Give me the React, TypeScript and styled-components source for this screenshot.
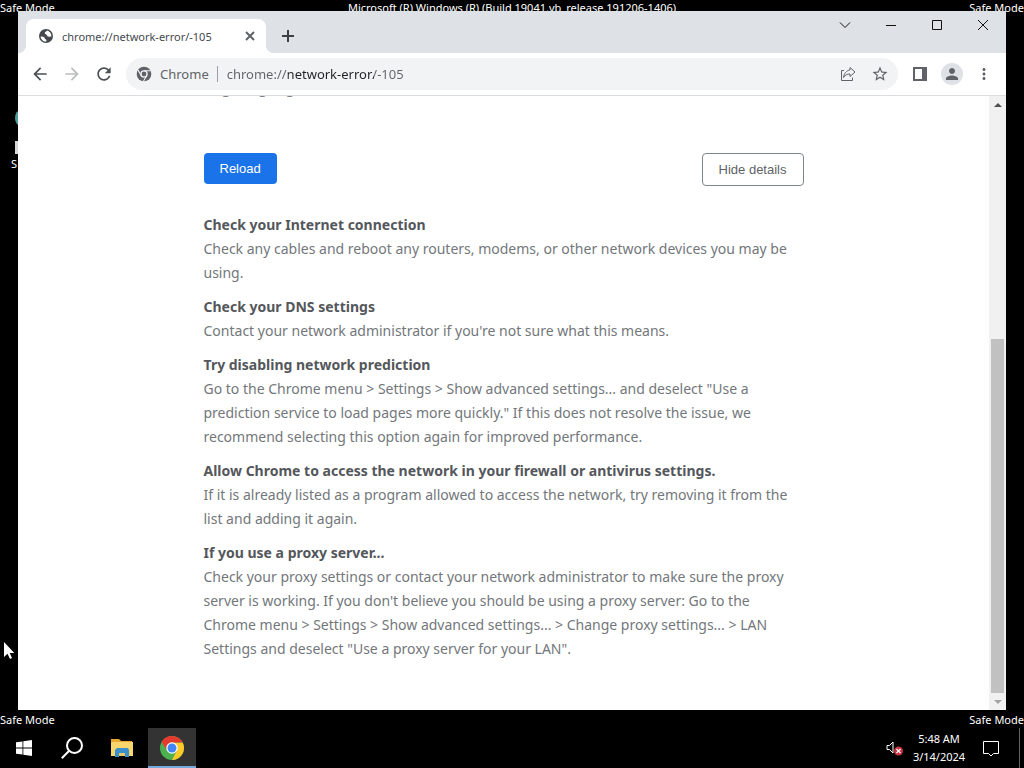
import React from "react";
import styled, { createGlobalStyle, css } from "styled-components";

const GlobalStyle = createGlobalStyle`
  *, *::before, *::after { box-sizing: border-box; }
  body { margin: 0; background: #000; font-family: "Noto Sans", "Open Sans", sans-serif; }
  button, input { font: inherit; }
  button { border: 0; padding: 0; background: none; color: inherit; }
  svg { display: block; flex: none; }
`;

const Desktop = styled.div`
  position: relative;
  display: flex;
  flex-direction: column;
  min-height: 100vh;
  background: #000;
  color: #fff;
  overflow: hidden;
`;

const Banner = styled.div<{ $height: number; $top?: number }>`
  display: flex;
  justify-content: space-between;
  align-items: flex-start;
  height: ${(p) => p.$height}px;
  padding-top: ${(p) => p.$top ?? 0}px;
  font-size: 11px;
  line-height: 16px;
  white-space: nowrap;
`;

const Shortcut = styled.div`
  position: absolute;
  left: 11px;
  top: 110px;
  display: flex;
  flex-direction: column;
  font-size: 11px;
  line-height: 16px;
`;

const Pointer = styled.svg`
  position: absolute;
  left: 3px;
  top: 641px;
`;

const Window = styled.section`
  position: relative;
  z-index: 1;
  display: flex;
  flex-direction: column;
  flex: 1;
  margin: 0 18px;
  background: #fff;
  color: #5f6368;
`;

const TabStrip = styled.header`
  display: flex;
  align-items: flex-end;
  height: 42px;
  padding-left: 8px;
  background: #dee1e6;
`;

const Tab = styled.div`
  position: relative;
  display: flex;
  align-items: center;
  gap: 8px;
  width: 240px;
  height: 34px;
  padding: 0 10px 0 12px;
  border-radius: 8px 8px 0 0;
  background: #fff;
  color: #45494d;
  font-size: 11px;

  &::before, &::after {
    content: "";
    position: absolute;
    bottom: 0;
    width: 8px;
    height: 8px;
  }
  &::before {
    right: 100%;
    background: radial-gradient(circle at 0 0, transparent 8px, #fff 8px);
  }
  &::after {
    left: 100%;
    background: radial-gradient(circle at 100% 0, transparent 8px, #fff 8px);
  }
`;

const TabTitle = styled.span`
  flex: 1;
  white-space: nowrap;
`;

const IconButton = styled.button<{ $w: number; $h?: number; $color?: string }>`
  display: flex;
  align-items: center;
  justify-content: center;
  flex: none;
  width: ${(p) => p.$w}px;
  height: ${(p) => p.$h ?? 32}px;
  color: ${(p) => p.$color ?? "#5f6368"};
`;

const Caption = styled.div`
  display: flex;
  align-self: flex-start;
  margin-left: auto;
`;

const Toolbar = styled.nav`
  display: flex;
  align-items: center;
  height: 43px;
  padding: 0 8px 0 6px;
  border-bottom: 1px solid #dadce0;
`;

const AddressBar = styled.div`
  display: flex;
  align-items: center;
  flex: 1;
  height: 32px;
  margin: 0 8px 0 6px;
  padding: 0 2px 0 10px;
  border-radius: 16px;
  background: #f1f3f4;
  font-size: 13px;
`;

const SiteName = styled.label`
  margin-left: 8px;
  padding-right: 8px;
  border-right: 1px solid #9aa0a6;
  line-height: 16px;
`;

const Address = styled.input`
  flex: 1;
  min-width: 0;
  height: 24px;
  margin-left: 9px;
  padding: 0;
  border: 0;
  outline: 0;
  color: transparent;
  background: linear-gradient(to right, #5f6368 61px, #202124 61px, #202124 147px, #5f6368 147px);
  background-clip: text;
  -webkit-background-clip: text;
`;

const Avatar = styled.span`
  display: flex;
  align-items: center;
  justify-content: center;
  width: 22px;
  height: 22px;
  border-radius: 50%;
  background: #dee1e6;
`;

const Viewport = styled.div`
  display: flex;
  flex: 1;
`;

const Page = styled.main`
  flex: 1;
  min-width: 0;
  padding: 0 24px 39px;
  overflow: hidden;
`;

const Article = styled.article`
  max-width: 600px;
  margin: 0 auto;
`;

const ErrorCode = styled.div`
  height: 2px;
  display: flex;
  align-items: flex-end;
  overflow: hidden;
  color: #5f6368;
  font-size: 11px;
  line-height: 14px;
`;

const Actions = styled.div`
  display: flex;
  justify-content: space-between;
  align-items: flex-start;
  height: 60px;
  margin-top: 55px;
`;

const ActionButton = styled.button<{ $primary?: boolean }>`
  padding: 8px 16px;
  border-radius: 4px;
  font-family: "Liberation Sans", Arial, sans-serif;
  font-size: 13px;
  line-height: 15px;
  ${(p) =>
    p.$primary
      ? css`
          background: #1a73e8;
          color: #fff;
        `
      : css`
          border: 1px solid #80868b;
          background: #fff;
          color: #5f6368;
        `}
`;

const Suggestion = styled.section`
  margin-bottom: 10px;
  font-size: 14px;
  line-height: 24px;
`;

const SuggestionTitle = styled.h2`
  margin: 0;
  color: #54575b;
  font-size: inherit;
  font-weight: 700;
`;

const SuggestionText = styled.p`
  margin: 0;
  color: #73777b;
  white-space: pre-line;
`;

const Scrollbar = styled.div`
  display: flex;
  flex-direction: column;
  width: 17px;
  background: #f1f1f1;
`;

const ScrollSpace = styled.div`
  flex: 226;
`;

const ScrollThumb = styled.div`
  flex: 354;
  margin: 0 2px;
  background: #c1c1c1;
`;

const Taskbar = styled.footer`
  display: flex;
  height: 40px;
  background: #000;
`;

const TaskButton = styled(IconButton)<{ $active?: boolean }>`
  border-bottom: 2px solid ${(p) => (p.$active ? "#76a9dc" : "transparent")};
  padding-top: 2px;
  background: ${(p) => (p.$active ? "#333" : "none")};
`;

const Tray = styled.div`
  display: flex;
  align-items: center;
  margin-left: auto;
`;

const Clock = styled.time`
  width: 62px;
  margin-right: 5px;
  font-size: 11px;
  line-height: 18px;
  text-align: center;
  white-space: nowrap;
`;

const ShowDesktop = styled.button`
  align-self: stretch;
  width: 5px;
  margin-left: 12px;
  border-left: 1px solid #666;
`;

const suggestions = [
  {
    title: "Check your Internet connection",
    text: "Check any cables and reboot any routers, modems, or other network devices you may be\nusing.",
  },
  {
    title: "Check your DNS settings",
    text: "Contact your network administrator if you're not sure what this means.",
  },
  {
    title: "Try disabling network prediction",
    text: 'Go to the Chrome menu > Settings > Show advanced settings... and deselect "Use a\nprediction service to load pages more quickly." If this does not resolve the issue, we\nrecommend selecting this option again for improved performance.',
  },
  {
    title: "Allow Chrome to access the network in your firewall or antivirus settings.",
    text: "If it is already listed as a program allowed to access the network, try removing it from the\nlist and adding it again.",
  },
  {
    title: "If you use a proxy server...",
    text: 'Check your proxy settings or contact your network administrator to make sure the proxy\nserver is working. If you don\'t believe you should be using a proxy server: Go to the\nChrome menu > Settings > Show advanced settings... > Change proxy settings... > LAN\nSettings and deselect "Use a proxy server for your LAN".',
  },
];

const Material = ({ d, size = 20 }: { d: string; size?: number }) => (
  <svg width={size} height={size} viewBox="0 0 24 24" fill="currentColor" aria-hidden="true">
    <path d={d} />
  </svg>
);

const icons = {
  globe:
    "M12 2C6.48 2 2 6.48 2 12s4.48 10 10 10 10-4.48 10-10S17.52 2 12 2zM4 12c0-.61.08-1.21.21-1.78L8.99 15v1c0 1.1.9 2 2 2v1.93C7.06 19.43 4 16.07 4 12zm13.89 5.4c-.26-.81-1-1.4-1.9-1.4h-1v-3c0-.55-.45-1-1-1h-6v-2h2c.55 0 1-.45 1-1V7h2c1.1 0 2-.9 2-2v-.41C17.92 5.77 20 8.65 20 12c0 2.08-.81 3.98-2.11 5.4z",
  back: "M20 11H7.83l5.59-5.59L12 4l-8 8 8 8 1.41-1.41L7.83 13H20v-2z",
  forward: "M12 4l-1.41 1.41L16.17 11H4v2h12.17l-5.58 5.59L12 20l8-8z",
  reload:
    "M17.65 6.35C16.2 4.9 14.21 4 12 4c-4.42 0-7.99 3.58-7.99 8s3.57 8 7.99 8c3.73 0 6.84-2.55 7.73-6h-2.08c-.82 2.33-3.04 4-5.65 4-3.31 0-6-2.69-6-6s2.69-6 6-6c1.66 0 3.14.69 4.22 1.78L13 11h7V4l-2.35 2.35z",
  star: "M22 9.24l-7.19-.62L12 2 9.19 8.63 2 9.24l5.46 4.73L5.82 21 12 17.27 18.18 21l-1.63-7.03L22 9.24zM12 15.4l-3.76 2.27 1-4.28-3.32-2.88 4.38-.38L12 6.1l1.71 4.04 4.38.38-3.32 2.88 1 4.28L12 15.4z",
  person:
    "M12 12c2.21 0 4-1.79 4-4s-1.79-4-4-4-4 1.79-4 4 1.79 4 4 4zm0 2c-2.67 0-8 1.34-8 4v2h16v-2c0-2.66-5.33-4-8-4z",
  more: "M12 8c1.1 0 2-.9 2-2s-.9-2-2-2-2 .9-2 2 .9 2 2 2zm0 2c-1.1 0-2 .9-2 2s.9 2 2 2 2-.9 2-2-.9-2-2-2zm0 6c-1.1 0-2 .9-2 2s.9 2 2 2 2-.9 2-2-.9-2-2-2z",
};

const Stroke = ({ d, size, width = 1 }: { d: string; size: number; width?: number }) => (
  <svg width={size} height={size} viewBox={`0 0 ${size} ${size}`} fill="none" stroke="currentColor" strokeWidth={width} aria-hidden="true">
    <path d={d} />
  </svg>
);

const Globe = () => (
  <svg width="16" height="16" viewBox="0 0 16 16" aria-hidden="true">
    <circle cx="8" cy="8" r="7" fill="currentColor" />
    <path
      d="M2.6 8.6C4.6 8.2 6.6 9 6.8 10.4C7 11.4 8.4 11 8.4 12.2V13.6C5.2 13.8 2.8 11.6 2.6 8.6ZM9 2.6C8.4 3.8 6.8 3.8 6.8 5.2C7.2 6.6 8.6 6 9 7.4C9.6 8.8 11.6 8.8 13.4 8.6C13.6 5.4 11.6 3.2 9 2.6Z"
      fill="#fff"
    />
  </svg>
);

const ChromeMono = () => (
  <svg width="16" height="16" viewBox="0 0 24 24" aria-hidden="true">
    <circle cx="12" cy="12" r="11" fill="#5f6368" />
    <circle cx="12" cy="12" r="5.6" fill="#f1f3f4" />
    <circle cx="12" cy="12" r="3.6" fill="#5f6368" />
    <path d="M12 7.2H22M7.8 14.4L2.8 5.8M16.2 14.4L11.2 23" stroke="#f1f3f4" strokeWidth="1.6" />
  </svg>
);

const ChromeLogo = () => (
  <svg width="24" height="24" viewBox="0 0 48 48" aria-hidden="true">
    <circle cx="24" cy="24" r="24" fill="#4caf50" />
    <path d="M24 13H45.3A24 24 0 0 1 24 48L33.5 29.5Z" fill="#ffc928" />
    <path d="M3.2 12A24 24 0 0 1 45.3 13H24L14.5 29.5Z" fill="#e33b2e" />
    <circle cx="24" cy="24" r="11.5" fill="#fff" />
    <circle cx="24" cy="24" r="9" fill="#4285f4" />
  </svg>
);

export default function App() {
  return (
    <>
      <GlobalStyle />
      <Desktop>
        <Banner $height={11}>
          <span>Safe Mode</span>
          <span>Microsoft (R) Windows (R) (Build 19041.vb_release.191206-1406)</span>
          <span>Safe Mode</span>
        </Banner>

        <Shortcut>
          <svg width="16" height="46" viewBox="0 0 16 46" aria-hidden="true">
            <ellipse cx="10" cy="8" rx="6" ry="8" fill="#4f9ca3" />
            <path d="M4 31h12v13H4z" fill="#d8d8d8" />
          </svg>
          <span>S</span>
        </Shortcut>

        <Window>
          <TabStrip>
            <Tab>
              <Globe />
              <TabTitle>chrome://network-error/-105</TabTitle>
              <IconButton $w={12} $h={16} aria-label="Close tab">
                <Stroke size={10} width={2} d="M1 1L9 9M9 1L1 9" />
              </IconButton>
            </Tab>
            <IconButton $w={44} $h={34} $color="#3c4043" aria-label="New tab">
              <Stroke size={12} width={2} d="M6 0V12M0 6H12" />
            </IconButton>
            <Caption>
              <IconButton $w={46} $h={28} $color="#111" aria-label="Search tabs">
                <Stroke size={12} d="M1 3.5L6 8.5L11 3.5" />
              </IconButton>
              <IconButton $w={46} $h={28} $color="#111" aria-label="Minimize">
                <Stroke size={10} d="M0 5.5H10" />
              </IconButton>
              <IconButton $w={46} $h={28} $color="#111" aria-label="Maximize">
                <Stroke size={10} d="M.5 .5H9.5V9.5H.5Z" />
              </IconButton>
              <IconButton $w={46} $h={28} $color="#111" aria-label="Close">
                <Stroke size={10} d="M0 0L10 10M10 0L0 10" />
              </IconButton>
            </Caption>
          </TabStrip>

          <Toolbar>
            <IconButton $w={32} aria-label="Back" $color="#4c5054"><Material d={icons.back} /></IconButton>
            <IconButton $w={32} $color="#babcbe" aria-label="Forward"><Material d={icons.forward} /></IconButton>
            <IconButton $w={32} aria-label="Reload" $color="#4c5054"><Material d={icons.reload} /></IconButton>
            <AddressBar>
              <ChromeMono />
              <SiteName htmlFor="address">Chrome</SiteName>
              <Address id="address" defaultValue="chrome://network-error/-105" />
              <IconButton $w={32} aria-label="Share">
                <Stroke
                  size={16}
                  d="M4 4.5H1.5V14.5H12.5V11.5M10 1.5L15 6L10 10.5V8C7 8 5 9 3.5 11.5C4 7.5 6.5 4.5 10 4Z"
                />
              </IconButton>
              <IconButton $w={32} aria-label="Bookmark"><Material d={icons.star} size={18} /></IconButton>
            </AddressBar>
            <IconButton $w={28} aria-label="Side panel">
              <svg width="14" height="14" viewBox="0 0 14 14" aria-hidden="true">
                <path fill="currentColor" fillRule="evenodd" d="M0 0H14V14H0ZM2 2V12H9V2Z" />
              </svg>
            </IconButton>
            <IconButton $w={36} aria-label="Profile">
              <Avatar><Material d={icons.person} size={18} /></Avatar>
            </IconButton>
            <IconButton $w={28} aria-label="Menu"><Material d={icons.more} size={18} /></IconButton>
          </Toolbar>

          <Viewport>
            <Page>
              <Article>
                <ErrorCode>ERR_NAME_NOT_RESOLVED</ErrorCode>
                <Actions>
                  <ActionButton $primary>Reload</ActionButton>
                  <ActionButton>Hide details</ActionButton>
                </Actions>
                {suggestions.map((s) => (
                  <Suggestion key={s.title}>
                    <SuggestionTitle>{s.title}</SuggestionTitle>
                    <SuggestionText>{s.text}</SuggestionText>
                  </Suggestion>
                ))}
              </Article>
            </Page>
            <Scrollbar>
              <IconButton $w={17} $h={17} $color="#505050" aria-label="Scroll up">
                <svg width="8" height="4" viewBox="0 0 8 4"><path d="M0 4L4 0L8 4Z" fill="currentColor" /></svg>
              </IconButton>
              <ScrollSpace />
              <ScrollThumb />
              <IconButton $w={17} $h={17} $color="#a3a3a3" aria-label="Scroll down">
                <svg width="8" height="4" viewBox="0 0 8 4"><path d="M0 0L4 4L8 0Z" fill="currentColor" /></svg>
              </IconButton>
            </Scrollbar>
          </Viewport>
        </Window>

        <Banner $height={18} $top={2}>
          <span>Safe Mode</span>
          <span>Safe Mode</span>
        </Banner>

        <Taskbar>
          <TaskButton $w={48} $h={40} $color="#fff" aria-label="Start">
            <svg width="16" height="16" viewBox="0 0 16 16" fill="currentColor" aria-hidden="true">
              <path d="M0 2.3L6.5 1.4V7.6H0ZM7.3 1.3L16 0V7.6H7.3ZM0 8.4H6.5V14.6L0 13.7ZM7.3 8.4H16V16L7.3 14.7Z" />
            </svg>
          </TaskButton>
          <TaskButton $w={48} $h={40} $color="#fff" aria-label="Search">
            <svg width="22" height="22" viewBox="0 0 22 22" fill="none" stroke="currentColor" strokeWidth="2" aria-hidden="true">
              <circle cx="13.5" cy="8.5" r="7.5" />
              <path d="M8.2 13.8L.8 21.2" />
            </svg>
          </TaskButton>
          <TaskButton $w={52} $h={40} aria-label="File Explorer">
            <svg width="22" height="18" viewBox="0 0 22 18" aria-hidden="true">
              <path d="M0 0H8L10 2H21V6H0Z" fill="#e8a92e" />
              <path d="M1 3H22V17H0V4Z" fill="#f9d56e" />
              <path d="M4 18V11L6 9H17L18 11V18H14V14H8V18Z" fill="#3c8fcd" />
              <path d="M8 14H14V17H8Z" fill="#e8c766" />
            </svg>
          </TaskButton>
          <TaskButton $w={48} $h={40} $active aria-label="Google Chrome"><ChromeLogo /></TaskButton>
          <Tray>
            <IconButton $w={26} $h={40} $color="#fff" aria-label="Volume">
              <svg width="18" height="16" viewBox="0 0 18 16" fill="none" aria-hidden="true">
                <path d="M1 5.5H3.5L7 2V13L3.5 9.5H1Z" stroke="currentColor" />
                <circle cx="12.5" cy="11" r="4.5" fill="#c8323f" />
                <path d="M10.5 9L14.5 13M14.5 9L10.5 13" stroke="#fff" strokeWidth="1.2" />
              </svg>
            </IconButton>
            <Clock>
              5:48 AM
              <br />
              3/14/2024
            </Clock>
            <IconButton $w={32} $h={40} $color="#fff" aria-label="Notifications">
              <Stroke size={18} d="M1.5 2.5H16.5V14.5H11.5L9 17L6.5 14.5H1.5Z" width={1} />
            </IconButton>
            <ShowDesktop aria-label="Show desktop" />
          </Tray>
        </Taskbar>

        <Pointer width="12" height="19" viewBox="0 0 12 19" aria-hidden="true">
          <path d="M1 1V16L4.5 12.7L7 18L9 17L6.7 12H11.3Z" fill="#fff" />
        </Pointer>
      </Desktop>
    </>
  );
}
